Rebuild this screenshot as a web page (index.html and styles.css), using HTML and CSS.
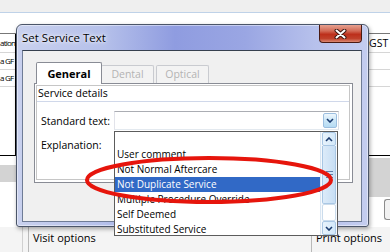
FILE: index.html
```html
<!DOCTYPE html>
<html lang="en">
<head>
<meta charset="UTF-8">
<title>Set Service Text</title>
<link rel="stylesheet" href="styles.css">
</head>
<body>
<div class="app">
    <div class="toolbar"></div>
    <div class="grid">
        <div class="col col-left">
            <div class="cell head">ation</div>
            <div class="cell">a GF</div>
            <div class="cell">a GF</div>
        </div>
        <div class="col col-mid"></div>
        <div class="col col-right">
            <div class="cell head">GST <span class="mark"></span></div>
            <div class="cell"></div>
            <div class="cell"></div>
        </div>
    </div>
    <div class="lower">
        <div class="bands">
            <div class="band-left"><div class="shade"></div></div>
            <div class="band-right">
                <div class="shade"></div>
                <div class="edge-btn"></div>
            </div>
        </div>
        <div class="options">
            <div class="pane-side"></div>
            <div class="opt visit">Visit options</div>
            <div class="opt print">Print options</div>
        </div>
    </div>
</div>

<div class="dialog">
    <div class="titlebar">
        <span class="title">Set Service Text</span>
        <div class="close">
            <svg width="13" height="10" viewBox="0 0 13 10">
                <path d="M2.5 1.5 L10.5 8.5 M10.5 1.5 L2.5 8.5" stroke="#3b1510" stroke-width="4" stroke-linecap="round"/>
                <path d="M2.5 1.5 L10.5 8.5 M10.5 1.5 L2.5 8.5" stroke="#fff" stroke-width="2" stroke-linecap="round"/>
            </svg>
        </div>
    </div>
    <div class="client">
        <div class="tabs">
            <div class="tab active">General</div>
            <div class="tab disabled">Dental</div>
            <div class="tab disabled">Optical</div>
        </div>
        <div class="panel">
            <div class="group">
                <div class="group-head">Service details</div>
                <div class="group-body">
                    <div class="field">
                        <span class="label">Standard text:</span>
                        <div class="combo">
                            <div class="combo-btn">
                                <svg width="8" height="5" viewBox="0 0 8 5"><path d="M1 1 L4 4 L7 1" stroke="#1b3c70" stroke-width="1.6" fill="none"/></svg>
                            </div>
                            <div class="dropdown">
                                <div class="items">
                                    <div class="item">&nbsp;</div>
                                    <div class="item">User comment</div>
                                    <div class="item">Not Normal Aftercare</div>
                                    <div class="item selected">Not Duplicate Service</div>
                                    <div class="item">Multiple Procedure Override</div>
                                    <div class="item">Self Deemed</div>
                                    <div class="item">Substituted Service</div>
                                </div>
                                <div class="scrollbar">
                                    <div class="sb-btn">
                                        <svg width="8" height="5" viewBox="0 0 8 5"><path d="M1 4 L4 1 L7 4" stroke="#1b3c70" stroke-width="1.6" fill="none"/></svg>
                                    </div>
                                    <div class="sb-thumb"><span class="grip"></span></div>
                                    <div class="sb-track"></div>
                                    <div class="sb-btn">
                                        <svg width="8" height="5" viewBox="0 0 8 5"><path d="M1 1 L4 4 L7 1" stroke="#1b3c70" stroke-width="1.6" fill="none"/></svg>
                                    </div>
                                </div>
                            </div>
                        </div>
                    </div>
                    <div class="field">
                        <span class="label">Explanation:</span>
                    </div>
                </div>
            </div>
        </div>
    </div>
</div>

<svg class="marker" width="390" height="252" viewBox="0 0 390 252">
    <ellipse cx="209" cy="180" rx="122" ry="22" fill="none" stroke="#e6150c" stroke-width="4"/>
</svg>
</body>
</html>
```
FILE: styles.css
```css
body {
    margin: 0;
    width: 390px;
    height: 252px;
    overflow: hidden;
    position: relative;
    background: #fff;
    font-family: "Open Sans", "Noto Sans", sans-serif;
    font-size: 10.5px;
    color: #000;
}

/* background application */
.app {
    height: 252px;
    display: flex;
    flex-direction: column;
}

.toolbar {
    height: 12px;
    background: #efefef;
    border-bottom: 1px solid #bfd2e8;
}

.grid {
    margin-top: 20px;
    height: 121px;
    display: flex;
    border-top: 1px solid #777;
    border-bottom: 1px solid #000;
}

.col-left {
    width: 15px;
    border-right: 1px solid #000;
    overflow: hidden;
}

.col-mid { flex: 1; }

.col-right {
    width: 21px;
    border-left: 1px solid #000;
    overflow: hidden;
}

.cell {
    height: 16px;
    line-height: 16px;
    border-bottom: 1px solid #d6d6d6;
    white-space: nowrap;
    overflow: hidden;
}

.col-left .cell {
    font-size: 8px;
    letter-spacing: -0.8px;
}

.cell.head {
    height: 18px;
    line-height: 18px;
}

.mark {
    display: inline-block;
    width: 3px;
    height: 11px;
    background: #e8c86a;
    vertical-align: middle;
}

.lower {
    flex: 1;
    display: flex;
    flex-direction: column;
}

.bands {
    height: 71px;
    display: flex;
    justify-content: space-between;
}

.band-left {
    width: 16px;
    padding-top: 9px;
}

.band-left .shade {
    height: 17px;
    background: #d3d3d3;
}

.band-right {
    width: 21px;
    padding-top: 2px;
}

.band-right .shade {
    height: 39px;
    background: #d3d3d3;
}

.edge-btn {
    margin: 2px 0 0 15px;
    height: 19px;
    border: 1px solid #8c8c8c;
    border-right: none;
    border-radius: 3px 0 0 3px;
    background: #f2f2f2;
}

.options {
    flex: 1;
    display: flex;
    background: #f4f4f4;
}

.pane-side {
    width: 22px;
    border-right: 1px solid #d0d0d0;
}

.opt {
    padding: 3px 0 0 4px;
    border-left: 1px solid #b9b9b9;
    font-size: 11px;
}

.visit {
    margin-left: 5px;
    width: 274px;
}

.print {
    margin-left: 4px;
    flex: 1;
}

/* dialog */
.dialog {
    position: absolute;
    left: 16px;
    top: 24px;
    width: 353px;
    height: 203px;
    box-sizing: border-box;
    padding: 0 6px 4px 5px;
    border: 1px solid #4b5569;
    border-radius: 6px 6px 3px 3px;
    background: linear-gradient(to right, #c9d1ee 0%, #b5c0ea 25%, #8f9ce0 45%, #9aa6e3 65%, #b7c1ec 85%, #c4cdef 100%);
    box-shadow: inset 0 0 0 1px rgba(255, 255, 255, 0.45), 1px 2px 4px rgba(0, 0, 0, 0.35);
    z-index: 1;
}

.titlebar {
    height: 25px;
    display: flex;
    align-items: flex-start;
}

.title {
    align-self: center;
    font-family: "Open Sans", "Noto Sans", sans-serif;
    font-size: 11.5px;
    text-shadow: 0 0 6px #fff, 0 0 3px #fff;
}

.close {
    margin-left: auto;
    width: 43px;
    height: 18px;
    box-sizing: border-box;
    border: 1px solid #4a1a12;
    border-top: none;
    border-radius: 0 0 4px 4px;
    background: linear-gradient(#e7a190 0%, #d26a56 35%, #bd2f1b 55%, #c0412b 80%, #dc8a73 100%);
    display: flex;
    align-items: center;
    justify-content: center;
}

.client {
    height: 172px;
    box-sizing: border-box;
    border: 1px solid #6f7c96;
    border-top-color: #36404f;
    background: #f0f0f0;
    padding: 11px 0 0 11px;
}

.tabs {
    display: flex;
    align-items: flex-end;
    padding-left: 2px;
    height: 21px;
}

.tab {
    box-sizing: border-box;
    height: 18px;
    border: 1px solid #c9cbd0;
    border-bottom: none;
    border-radius: 2px 2px 0 0;
    text-align: center;
    font-size: 10.5px;
    line-height: 17px;
    background: #f3f3f3;
}

.tab.active {
    position: relative;
    z-index: 1;
    width: 66px;
    height: 22px;
    margin-bottom: -1px;
    border-color: #898c95;
    background: #fff;
    font-weight: bold;
    font-size: 11px;
    line-height: 21px;
}

.tab.disabled {
    color: #b4b4b4;
    width: 53px;
    margin-left: -1px;
}

.tab.disabled + .tab.disabled {
    margin-left: 2px;
}

.panel {
    width: 319px;
    height: 100px;
    box-sizing: border-box;
    border: 1px solid #898c95;
    background: #fff;
    padding: 1px 2px 2px 1px;
}

.group {
    height: 100%;
    box-sizing: border-box;
    border: 1px solid #c6c6c6;
}

.group-head {
    height: 15px;
    line-height: 15px;
    padding-left: 1px;
    border-bottom: 1px solid #d0d8ea;
    font-size: 10.5px;
}

.group-body {
    padding: 9px 0 0 4px;
    display: flex;
    flex-direction: column;
    gap: 5px;
}

.field {
    display: flex;
    align-items: center;
    height: 19px;
}

.label {
    width: 73px;
}

.combo {
    position: relative;
    width: 225px;
    height: 19px;
    box-sizing: border-box;
    border: 1px solid #abadb3;
    border-color: #abadb3 #dbdfe6 #e3e9ef #e2e3ea;
    background: #fff;
}

.combo-btn {
    position: absolute;
    right: 1px;
    top: 1px;
    width: 14px;
    height: 15px;
    box-sizing: border-box;
    border: 1px solid #9cbfe0;
    border-radius: 2px;
    background: linear-gradient(#eef7fd, #cbe6f7 50%, #b5dbf3);
    display: flex;
    align-items: center;
    justify-content: center;
}

.dropdown {
    position: absolute;
    left: -1px;
    top: 19px;
    width: 224px;
    height: 105px;
    box-sizing: border-box;
    border: 1px solid #5c5c5c;
    background: #fff;
    display: flex;
    z-index: 2;
    overflow: hidden;
}

.items {
    flex: 1;
}

.item {
    height: 15px;
    line-height: 15px;
    padding-left: 2px;
    font-size: 10px;
    white-space: nowrap;
}

.item.selected {
    background: #3169c6;
    color: #fff;
}

.scrollbar {
    width: 16px;
    display: flex;
    flex-direction: column;
    background: #f7fafd;
    border-left: 1px solid #d9e6f3;
}

.sb-btn {
    height: 14px;
    box-sizing: border-box;
    margin: 0 1px;
    border: 1px solid #a9c7e4;
    border-radius: 2px;
    background: linear-gradient(to right, #e8f3fc, #d3e8f9);
    display: flex;
    align-items: center;
    justify-content: center;
}

.sb-thumb {
    height: 58px;
    margin: 0 1px;
    box-sizing: border-box;
    border: 1px solid #a9c7e4;
    border-top: none;
    border-radius: 0 0 2px 2px;
    background: linear-gradient(to right, #dcebf9, #c7def4);
    display: flex;
    align-items: center;
    justify-content: center;
}

.grip {
    width: 7px;
    height: 5px;
    border-top: 1px solid #5c7fa8;
    border-bottom: 1px solid #5c7fa8;
    background: linear-gradient(transparent 2px, #5c7fa8 2px, #5c7fa8 3px, transparent 3px);
}

.sb-track {
    flex: 1;
    margin: 0 1px;
    border: 1px solid #cbdcec;
    border-radius: 2px;
    background: #fff;
}

.marker {
    position: absolute;
    left: 0;
    top: 0;
    z-index: 3;
    pointer-events: none;
}
```
